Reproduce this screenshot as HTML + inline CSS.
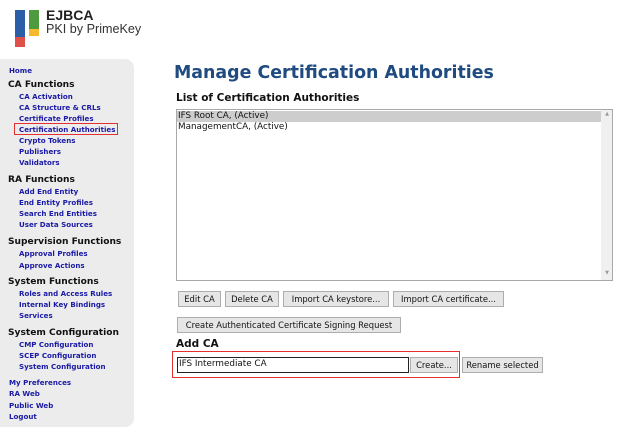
<!DOCTYPE html>
<html><head><style>
body{margin:0;width:624px;height:431px;background:#fff;position:relative;overflow:hidden;font-family:"DejaVu Sans","Liberation Sans",sans-serif;}
.a{position:absolute;white-space:nowrap;}
.side{position:absolute;left:0;top:59px;width:134px;height:368px;background:#ececec;border-radius:0 9px 9px 0;}
.l{position:absolute;white-space:nowrap;font-size:7.1px;font-weight:bold;color:#1a1aa6;line-height:10px;}
.h{position:absolute;white-space:nowrap;font-size:9.1px;font-weight:bold;color:#111;line-height:12px;}
.btn{position:absolute;border:1px solid #adadad;background:#e6e6e6;font-size:8.4px;line-height:14px;text-align:center;color:#111;box-sizing:border-box;height:16px;}
</style></head><body>
<div class="a" style="left:15px;top:10px;width:10px;height:27px;background:#2b5ea7"></div>
<div class="a" style="left:15px;top:37px;width:10px;height:10px;background:#e0504a"></div>
<div class="a" style="left:29px;top:10px;width:10px;height:19px;background:#4e9a3e"></div>
<div class="a" style="left:29px;top:29px;width:10px;height:7px;background:#f5b82e"></div>
<div class="a" style="left:46px;top:7px;font-family:'Liberation Sans',sans-serif;font-weight:bold;font-size:14px;color:#222">EJBCA</div>
<div class="a" style="left:46px;top:22px;font-family:'Liberation Sans',sans-serif;font-size:12.6px;color:#333">PKI by PrimeKey</div>
<div class="side"></div>
<div class="l" style="left:9px;top:66px">Home</div>
<div class="h" style="left:8px;top:79px">CA Functions</div>
<div class="l" style="left:19px;top:92px">CA Activation</div>
<div class="l" style="left:19px;top:103px">CA Structure &amp; CRLs</div>
<div class="l" style="left:19px;top:114px">Certificate Profiles</div>
<div class="l" style="left:19px;top:125px">Certification Authorities</div>
<div class="a" style="left:14px;top:123px;width:104px;height:12px;border:1.5px solid #e53030;box-sizing:border-box"></div>
<div class="l" style="left:19px;top:136px">Crypto Tokens</div>
<div class="l" style="left:19px;top:147px">Publishers</div>
<div class="l" style="left:19px;top:158px">Validators</div>
<div class="h" style="left:8px;top:174px">RA Functions</div>
<div class="l" style="left:19px;top:187px">Add End Entity</div>
<div class="l" style="left:19px;top:198px">End Entity Profiles</div>
<div class="l" style="left:19px;top:209px">Search End Entities</div>
<div class="l" style="left:19px;top:220px">User Data Sources</div>
<div class="h" style="left:8px;top:236px">Supervision Functions</div>
<div class="l" style="left:19px;top:249px">Approval Profiles</div>
<div class="l" style="left:19px;top:261px">Approve Actions</div>
<div class="h" style="left:8px;top:276px">System Functions</div>
<div class="l" style="left:19px;top:289px">Roles and Access Rules</div>
<div class="l" style="left:19px;top:300px">Internal Key Bindings</div>
<div class="l" style="left:19px;top:311px">Services</div>
<div class="h" style="left:8px;top:327px">System Configuration</div>
<div class="l" style="left:19px;top:340px">CMP Configuration</div>
<div class="l" style="left:19px;top:351px">SCEP Configuration</div>
<div class="l" style="left:19px;top:362px">System Configuration</div>
<div class="l" style="left:9px;top:378px">My Preferences</div>
<div class="l" style="left:9px;top:389px">RA Web</div>
<div class="l" style="left:9px;top:401px">Public Web</div>
<div class="l" style="left:9px;top:412px">Logout</div>

<div class="a" style="left:174px;top:63px;font-size:17.4px;font-weight:bold;color:#1f4b80">Manage Certification Authorities</div>
<div class="a" style="left:176px;top:92px;font-size:10.5px;font-weight:bold;color:#111">List of Certification Authorities</div>
<div class="a" style="left:176px;top:109px;width:437px;height:172px;border:1px solid #a9a9a9;box-sizing:border-box;background:#fff">
 <div class="a" style="left:0;top:1px;width:424px;height:11px;background:#cdcdcd"></div>
 <div class="a" style="left:1px;top:0px;font-size:8.8px;line-height:12px;color:#111">IFS Root CA, (Active)</div>
 <div class="a" style="left:1px;top:11px;font-size:8.8px;line-height:12px;color:#111">ManagementCA, (Active)</div>
 <div class="a" style="right:0;top:0;width:11px;height:170px;background:#f0f0f0"></div>
 <div class="a" style="right:3px;top:1px;font-size:5px;color:#999">▲</div>
 <div class="a" style="right:3px;top:160px;font-size:5px;color:#999">▼</div>
</div>
<div class="btn" style="left:178px;top:291px;width:43px">Edit CA</div>
<div class="btn" style="left:225px;top:291px;width:54px">Delete CA</div>
<div class="btn" style="left:283px;top:291px;width:106px">Import CA keystore...</div>
<div class="btn" style="left:393px;top:291px;width:111px">Import CA certificate...</div>
<div class="btn" style="left:177px;top:317px;width:224px">Create Authenticated Certificate Signing Request</div>
<div class="a" style="left:176px;top:338px;font-size:10.5px;font-weight:bold;color:#111">Add CA</div>
<div class="a" style="left:177px;top:357px;width:232px;height:16px;border:1.5px solid #222;box-sizing:border-box;font-size:8.8px;line-height:13px;padding-left:1px;color:#111">IFS Intermediate CA</div>
<div class="btn" style="left:410px;top:357px;width:48px">Create...</div>
<div class="btn" style="left:462px;top:357px;width:81px">Rename selected</div>
<div class="a" style="left:172px;top:351px;width:288px;height:27px;border:1.5px solid #e53030;box-sizing:border-box"></div>
</body></html>
